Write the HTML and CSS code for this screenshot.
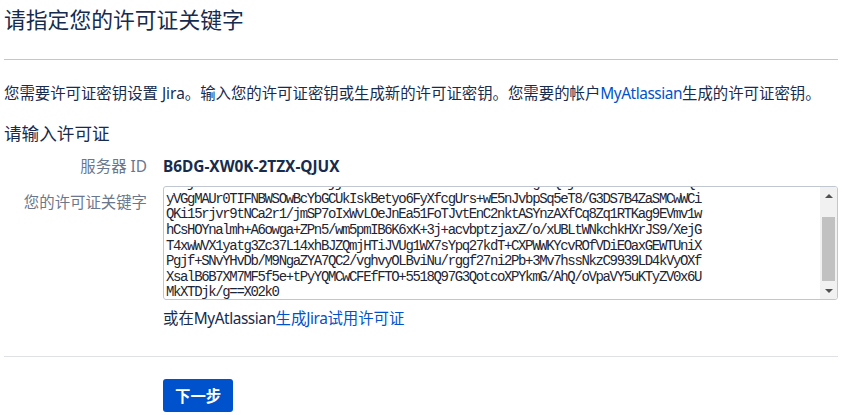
FILE: index.html
```html
<!DOCTYPE html>
<html lang="zh-CN">
<head>
<meta charset="utf-8">
<title>请指定您的许可证关键字</title>
<link rel="stylesheet" href="styles.css">
</head>
<body>
<div class="page">
  <h1 class="title">请指定您的许可证关键字</h1>
  <hr class="rule">
  <p class="intro">您需要许可证密钥设置 Jira。输入您的许可证密钥或生成新的许可证密钥。您需要的帐户<a class="link latin" href="#">MyAtlassian</a>生成的许可证密钥。</p>
  <h2 class="subtitle">请输入许可证</h2>
  <div class="form">
    <div class="row">
      <div class="label">服务器 ID</div>
      <div class="value server-id">B6DG-XW0K-2TZX-QJUX</div>
    </div>
    <div class="row">
      <div class="label label-key">您的许可证关键字</div>
      <div class="field">
        <div class="textarea">
          <div class="ta-text">
            <div class="ta-line">RCSjXPO/ubMnOONmC1D0xmajj9xvYk3M1MsN13bHRhPCCA2VVODWgkVQEj19zVM2RZoMEv16G8QX</div>
            <div class="ta-line">yVGgMAUr0TIFNBWSOwBcYbGCUkIskBetyo6FyXfcgUrs+wE5nJvbpSq5eT8/G3DS7B4ZaSMCwWCi</div>
            <div class="ta-line">QKi15rjvr9tNCa2r1/jmSP7oIxWvLOeJnEa51FoTJvtEnC2nktASYnzAXfCq8Zq1RTKag9EVmv1w</div>
            <div class="ta-line">hCsHOYnalmh+A6owga+ZPn5/wm5pmIB6K6xK+3j+acvbptzjaxZ/o/xUBLtWNkchkHXrJS9/XejG</div>
            <div class="ta-line">T4xwWVX1yatg3Zc37L14xhBJZQmjHTiJVUg1WX7sYpq27kdT+CXPWWKYcvROfVDiEOaxGEWTUniX</div>
            <div class="ta-line">Pgjf+SNvYHvDb/M9NgaZYA7QC2/vghvyOLBviNu/rggf27ni2Pb+3Mv7hssNkzC9939LD4kVyOXf</div>
            <div class="ta-line">XsalB6B7XM7MF5f5e+tPyYQMCwCFEfFTO+5518Q97G3QotcoXPYkmG/AhQ/oVpaVY5uKTyZV0x6U</div>
            <div class="ta-line">MkXTDjk/g==X02k0</div>
          </div>
          <div class="scrollbar">
            <div class="sb-btn"><span class="arrow-up"></span></div>
            <div class="sb-track"><div class="sb-thumb"></div></div>
            <div class="sb-btn"><span class="arrow-down"></span></div>
          </div>
        </div>
        <div class="hint">或在<span class="latin">MyAtlassian</span><a class="link" href="#">生成<span class="latin">Jira</span>试用许可证</a></div>
      </div>
    </div>
  </div>
  <hr class="rule rule-light">
  <div class="actions">
    <button class="btn" type="button">下一步</button>
  </div>
</div>
</body>
</html>
```

FILE: styles.css
```css
html, body {
  margin: 0;
  padding: 0;
  background: #ffffff;
}

body {
  font-family: "Noto Sans", "Noto Sans CJK SC", sans-serif;
  color: #172b4d;
  font-size: 15.4px;
}

.page {
  padding: 0 4px;
}

.title {
  margin: 0;
  padding-top: 6px;
  font-size: 21.8px;
  line-height: 28px;
  font-weight: normal;
  color: #172b4d;
}

.rule {
  border: 0;
  border-top: 1px solid #c1c7d0;
  margin: 25px 0 0 0;
  height: 0;
}

.intro {
  margin: 23px 0 0 0;
  line-height: 22px;
  white-space: nowrap;
}

.latin {
  letter-spacing: -0.45px;
}

.link {
  color: #0052cc;
  text-decoration: none;
}

.subtitle {
  margin: 15px 0 0 0;
  font-size: 17.6px;
  line-height: 26px;
  font-weight: normal;
}

.form {
  margin-top: 10px;
  display: flex;
  flex-direction: column;
  gap: 8px;
}

.row {
  display: flex;
  gap: 16px;
}

.label {
  width: 143px;
  flex: none;
  text-align: right;
  color: #6b778c;
  line-height: 22px;
}

.label-key {
  padding-top: 6px;
}

.value {
  line-height: 22px;
}

.server-id {
  font-weight: bold;
  color: #172b4d;
}

.field {
  flex: 1;
  display: flex;
  flex-direction: column;
}

.textarea {
  height: 112px;
  border: 1px solid #c1c7d0;
  border-radius: 3px;
  display: flex;
  overflow: hidden;
  background: #fff;
}

.ta-text {
  flex: 1;
  display: flex;
  flex-direction: column;
  justify-content: flex-end;
  overflow: hidden;
  margin-bottom: -2px;
  padding: 0 0 0 2px;
  font-family: "Liberation Mono", monospace;
  font-size: 14px;
  letter-spacing: -1.36px;
  line-height: 15.6px;
  color: #1d2433;
  white-space: pre;
}

.ta-line {
  flex: none;
}

.scrollbar {
  width: 17px;
  flex: none;
  display: flex;
  flex-direction: column;
  background: #f1f1f1;
}

.sb-btn {
  height: 17px;
  flex: none;
  display: flex;
  align-items: center;
  justify-content: center;
}

.arrow-up {
  width: 0;
  height: 0;
  border-left: 4px solid transparent;
  border-right: 4px solid transparent;
  border-bottom: 4px solid #505050;
}

.arrow-down {
  width: 0;
  height: 0;
  border-left: 4px solid transparent;
  border-right: 4px solid transparent;
  border-top: 4px solid #505050;
}

.sb-track {
  flex: 1;
  display: flex;
  flex-direction: column;
  justify-content: flex-end;
  padding: 0 2px 1px 2px;
}

.sb-thumb {
  height: 64px;
  background: #c1c1c1;
}

.hint {
  margin-top: 8px;
  line-height: 22px;
}

.rule-light {
  border-top-color: #dfe1e6;
  margin-top: 26px;
}

.actions {
  margin-top: 22px;
  padding-left: 159px;
}

.btn {
  background: #0052cc;
  color: #ffffff;
  border: 0;
  border-radius: 3px;
  height: 33px;
  padding: 0 12px;
  font-family: "Noto Sans", "Noto Sans CJK SC", sans-serif;
  font-size: 15.4px;
  font-weight: bold;
  cursor: pointer;
}
```
